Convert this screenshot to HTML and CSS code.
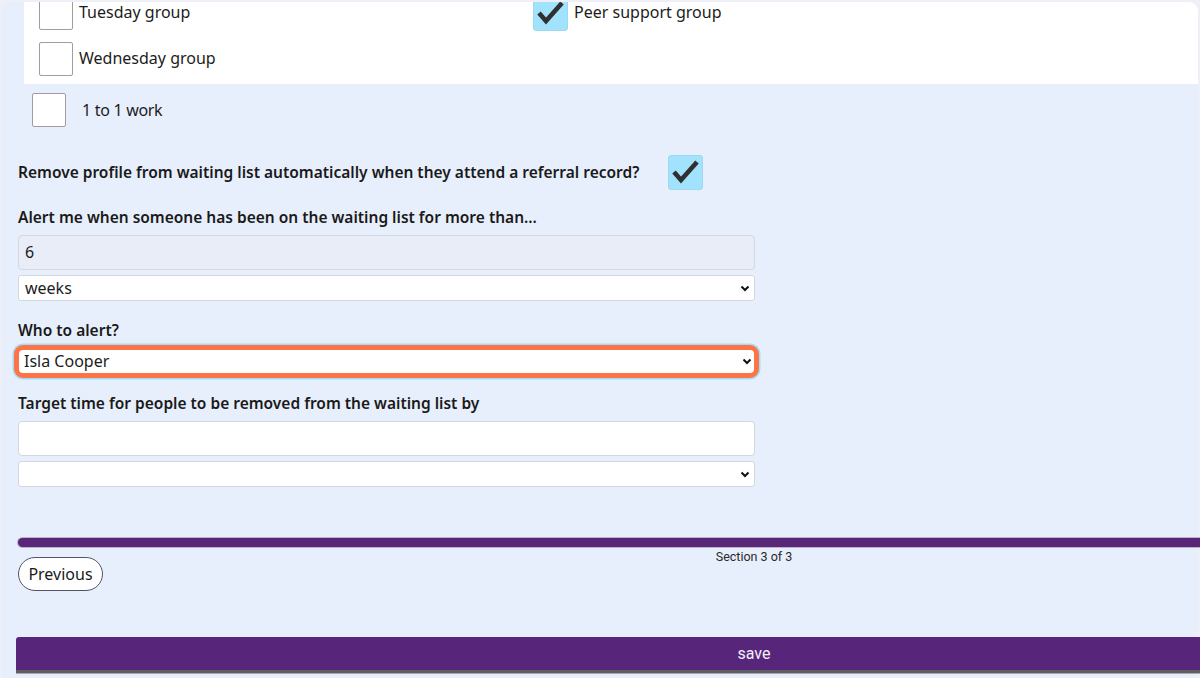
FILE: index.html
```html
<!DOCTYPE html>
<html lang="en">
<head>
<meta charset="utf-8">
<title>Waiting list settings</title>
<link rel="stylesheet" href="styles.css">
</head>
<body>
<div class="frame">
  <div class="content">
    <div class="group-panel">
      <div class="group-grid">
        <label class="check-row"><span class="box"></span><span>Tuesday group</span></label>
        <label class="check-row"><span class="box checked"><svg viewBox="0 0 35 35" width="35" height="35"><polyline points="6,17 13,25 29,7" /></svg></span><span>Peer support group</span></label>
        <label class="check-row"><span class="box"></span><span>Wednesday group</span></label>
      </div>
    </div>

    <label class="check-row one-to-one"><span class="box"></span><span>1 to 1 work</span></label>

    <div class="remove-row">
      <span class="field-label">Remove profile from waiting list automatically when they attend a referral record?</span>
      <span class="box checked"><svg viewBox="0 0 35 35" width="35" height="35"><polyline points="6,17 13,25 29,7" /></svg></span>
    </div>

    <div class="form-col">
      <div class="field-label alert-label">Alert me when someone has been on the waiting list for more than...</div>
      <div class="input filled">6</div>
      <div class="select">weeks</div>

      <div class="field-label who-label">Who to alert?</div>
      <div class="select highlight">Isla Cooper</div>

      <div class="field-label target-label">Target time for people to be removed from the waiting list by</div>
      <div class="input"></div>
      <div class="select"></div>
    </div>

    <div class="progress">
      <div class="progress-bar"></div>
      <div class="section-label">Section 3 of 3</div>
    </div>
    <button class="prev-btn">Previous</button>

    <button class="save-btn">save</button>
  </div>
</div>
</body>
</html>
```

FILE: styles.css
```css
html, body {
  margin: 0;
  padding: 0;
  height: 678px;
  overflow: hidden;
  background: #eeeff7;
}

body {
  font-family: "Noto Sans", "DejaVu Sans", sans-serif;
  color: #1c1c1c;
}

.frame {
  margin: 2px 2px 0 2px;
  width: 1196px;
  height: 676px;
  background: #e8effc;
  border-radius: 9px 9px 0 0;
}

.content {
  width: 1472px;
  padding-left: 16px;
}

.group-panel {
  margin-left: 6px;
  width: 1174px;
  height: 82px;
  background: #ffffff;
  border-radius: 0 9px 0 0;
  overflow: hidden;
  box-sizing: border-box;
  padding-left: 15px;
}

.group-grid {
  display: grid;
  grid-template-columns: 494px 494px;
  row-gap: 12px;
  margin-top: -6px;
}

.check-row {
  display: flex;
  align-items: center;
  gap: 6px;
  font-size: 16px;
  line-height: 22px;
  height: 34px;
}

.check-row > span:last-child {
  margin-top: -2px;
}

.box {
  flex: none;
  width: 34px;
  height: 34px;
  box-sizing: border-box;
  background: #fff;
  border: 1px solid #9e9e9e;
  border-radius: 2px;
  display: block;
}

.box.checked {
  width: 35px;
  height: 35px;
  background: #a1e3fd;
  border: 1px solid #9fd8ef;
  border-radius: 3px;
  position: relative;
}

.box.checked svg {
  position: absolute;
  left: -1px;
  top: -1px;
}

.box.checked polyline {
  fill: none;
  stroke: #303030;
  stroke-width: 4.6;
  stroke-linejoin: miter;
}

.one-to-one {
  margin-top: 9px;
  margin-left: 14px;
  gap: 16px;
  letter-spacing: -0.3px;
}

.one-to-one > span:last-child {
  margin-top: 0;
}

.remove-row {
  display: flex;
  align-items: center;
  gap: 29px;
  margin-top: 28px;
  height: 35px;
}

.remove-row .field-label {
  margin-top: -2px;
}

.field-label {
  font-weight: 600;
  font-size: 15.5px;
  line-height: 20px;
  color: #1a1a1a;
}

.form-col {
  width: 737px;
  display: flex;
  flex-direction: column;
}

.alert-label {
  margin-top: 17px;
}

.who-label {
  margin-top: 19px;
}

.target-label {
  margin-top: 15px;
}

.input {
  margin-top: 8px;
  height: 35px;
  box-sizing: border-box;
  border: 1px solid #d3d7de;
  border-radius: 4px;
  background: #fff;
  padding: 0 6px;
  font-size: 16px;
  line-height: 33px;
}

.input.filled {
  background: #e8edf8;
}

.select {
  margin-top: 5px;
  height: 26px;
  box-sizing: border-box;
  border: 1px solid #d3d7de;
  border-radius: 3px;
  background: #fff url("data:image/svg+xml;utf8,<svg xmlns='http://www.w3.org/2000/svg' width='10' height='7' viewBox='0 0 10 7'><polyline points='1.5,1.5 5,5 8.5,1.5' fill='none' stroke='%23111' stroke-width='2'/></svg>") no-repeat right 4px center;
  padding: 0 6px;
  font-size: 16px;
  line-height: 24px;
}

.select.highlight {
  margin: 5px -4px 0 -4px;
  height: 33px;
  border: 5px solid #fd7446;
  border-radius: 9px;
  box-shadow: 0 0 0 1.5px #a3dcf5;
  padding: 0 5px;
  line-height: 23px;
  background-position: right 2px center;
}

.progress {
  margin-top: 51px;
}

.progress-bar {
  height: 9px;
  background: #5a2678;
  border-radius: 5px 0 0 5px;
  box-shadow: 0 0 0 1px #b9b4c9;
}

.section-label {
  height: 10px;
  text-align: center;
  font-family: Roboto, "Liberation Sans", sans-serif;
  font-size: 12.5px;
  line-height: 20px;
  color: #2a2a2a;
}

.prev-btn {
  display: block;
  margin-top: 0;
  width: 85px;
  height: 34px;
  border: 1px solid #4f5566;
  border-radius: 17px;
  background: #fff;
  font-family: "Noto Sans", "DejaVu Sans", sans-serif;
  font-size: 16px;
  color: #1a1a1a;
  padding: 0;
}

.save-btn {
  display: block;
  margin-top: 46px;
  margin-left: -2px;
  width: 1476px;
  height: 33px;
  border: none;
  border-radius: 3px 3px 0 0;
  background: #57267a;
  box-shadow: 0 3px 0 #5f5f63, 0 4px 0 #a9a9b3;
  color: #f2eefa;
  font-family: Roboto, "Liberation Sans", sans-serif;
  font-size: 16px;
  padding: 0;
}
```
